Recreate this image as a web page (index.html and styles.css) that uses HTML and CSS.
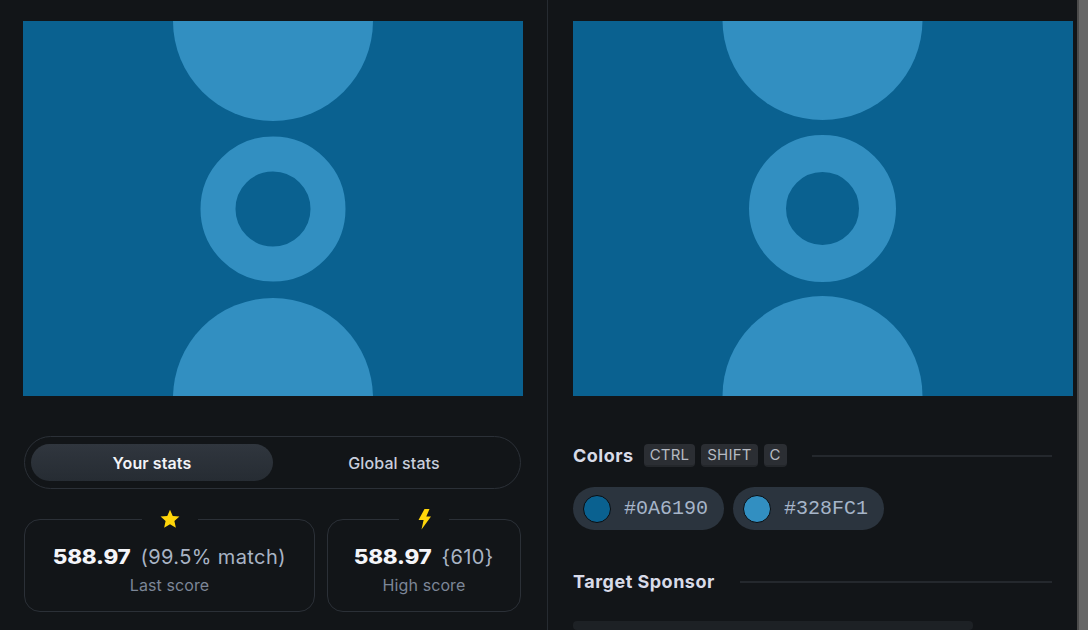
FILE: index.html
```html
<!DOCTYPE html>
<html>
<head>
<meta charset="utf-8">
<link rel="stylesheet" href="styles.css">
</head>
<body>
<div class="app">
  <section class="left">
    <svg class="canvas" viewBox="0 0 500 375" width="500" height="375">
      <rect width="500" height="375" fill="#0A6190"/>
      <circle cx="250" cy="0" r="100" fill="#328FC1"/>
      <circle cx="250" cy="188" r="55" fill="none" stroke="#328FC1" stroke-width="35"/>
      <circle cx="250" cy="377" r="100" fill="#328FC1"/>
    </svg>
    <div class="toggle">
      <button class="tab active">Your stats</button>
      <button class="tab">Global stats</button>
    </div>
    <div class="cards">
      <div class="card card-last">
        <span class="badge">
          <svg width="22" height="22" viewBox="0 0 24 24"><path d="M12 2l3 6.7 7.3.7-5.5 4.9 1.6 7.2L12 17.8l-6.4 3.7 1.6-7.2-5.5-4.9 7.3-.7z" fill="#FFD60A"/></svg>
        </span>
        <div class="value"><b>588.97</b><span class="sub">(99.5% match)</span></div>
        <div class="label">Last score</div>
      </div>
      <div class="card card-high">
        <span class="badge">
          <svg width="16" height="22" viewBox="0 0 16 22"><path d="M8.5 1H13.5L10.3 8.5H15L5.5 21.5 7.6 12H2.5z" fill="#FFD60A"/></svg>
        </span>
        <div class="value"><b>588.97</b><span class="sub">{610}</span></div>
        <div class="label">High score</div>
      </div>
    </div>
  </section>
  <section class="right">
    <svg class="canvas" viewBox="0 0 500 375" width="500" height="375">
      <rect width="500" height="375" fill="#0A6190"/>
      <circle cx="249.5" cy="-1" r="100" fill="#328FC1"/>
      <circle cx="249.5" cy="187.5" r="55" fill="none" stroke="#328FC1" stroke-width="37"/>
      <circle cx="249.5" cy="375" r="100" fill="#328FC1"/>
    </svg>
    <div class="heading heading-colors">
      <h2>Colors</h2>
      <span class="keys"><kbd>CTRL</kbd><kbd>SHIFT</kbd><kbd>C</kbd></span>
      <span class="rule"></span>
    </div>
    <div class="chips">
      <div class="chip"><span class="swatch swatch-dark"></span><span class="hex">#0A6190</span></div>
      <div class="chip"><span class="swatch swatch-light"></span><span class="hex">#328FC1</span></div>
    </div>
    <div class="heading heading-sponsor">
      <h2>Target Sponsor</h2>
      <span class="rule"></span>
    </div>
    <div class="sponsor-box"></div>
  </section>
  <div class="scrollbar"><div class="thumb"></div></div>
</div>
</body>
</html>
```
FILE: styles.css
```css
* { box-sizing: border-box; }
html, body { margin: 0; padding: 0; height: 100%; overflow: hidden; }
body {
  background: #121518;
  font-family: Inter, "Noto Sans", sans-serif;
  color: #d6d9e6;
}
.app {
  display: flex;
  height: 630px;
}
.left {
  width: 548px;
  flex: none;
  border-right: 1px solid #262b31;
  padding: 21px 0 0 23px;
  display: flex;
  flex-direction: column;
}
.canvas { display: block; flex: none; }
.toggle {
  margin: 40px 0 0 1px;
  width: 497px;
  height: 53px;
  border: 1.5px solid #2b3037;
  border-radius: 27px;
  display: flex;
  align-items: center;
  padding: 0 6px;
}
.tab {
  flex: none;
  width: 242px;
  height: 37px;
  border: none;
  border-radius: 19px;
  background: transparent;
  font-family: inherit;
  font-size: 16px;
  font-weight: 500;
  letter-spacing: 0.1px;
  color: #c9cedc;
  padding: 0;
}
.tab.active {
  background: linear-gradient(180deg, #30363e 0%, #262c33 100%);
  color: #f2f3f7;
  font-weight: 600;
}
.cards {
  display: flex;
  gap: 12px;
  margin: 30px 0 0 1px;
}
.card {
  position: relative;
  height: 93px;
  border: 1.5px solid #2b3037;
  border-radius: 16px;
  display: flex;
  flex-direction: column;
  align-items: center;
  padding-top: 24px;
}
.card-last { width: 291px; }
.card-high { width: 194px; }
.badge {
  position: absolute;
  top: -12px;
  left: 50%;
  transform: translateX(-50%);
  background: #121518;
  padding: 0 17px;
  height: 22px;
  display: flex;
  align-items: center;
  justify-content: center;
}
.value {
  font-size: 20px;
  line-height: 26px;
  display: flex;
  gap: 10px;
  align-items: baseline;
  white-space: nowrap;
}
.value b {
  font-weight: 800;
  color: #f4f5f9;
  letter-spacing: -0.2px;
  transform: scaleX(1.12);
  display: inline-block;
  margin: 0 4px;
}
.value .sub { color: #a9b4c5; font-weight: 400; letter-spacing: 0.4px; }
.label {
  margin-top: 5px;
  font-size: 16px;
  color: #7c8697;
  letter-spacing: 0.1px;
}
.right {
  flex: 1;
  padding: 21px 0 0 25px;
  display: flex;
  flex-direction: column;
}
.heading {
  display: flex;
  align-items: center;
  width: 479px;
}
.heading h2 {
  margin: 0;
  font-size: 18px;
  font-weight: 700;
  color: #d8dbe8;
  letter-spacing: 0.5px;
  white-space: nowrap;
}
.heading-colors { margin-top: 48px; height: 23px; }
.keys { display: flex; gap: 6px; margin-left: 10px; }
kbd {
  font-family: Inter, "Noto Sans", sans-serif;
  font-size: 15px;
  line-height: 21px;
  height: 23px;
  padding: 0 6px;
  background: #2b2e33;
  border-bottom: 2px solid #24272b;
  border-radius: 4px;
  color: #b6bac2;
  letter-spacing: 0.2px;
}
.rule {
  flex: 1;
  height: 2px;
  background: #24282d;
  margin-left: 25px;
}
.chips {
  display: flex;
  gap: 9px;
  margin-top: 20px;
}
.chip {
  width: 151px;
  height: 43px;
  border-radius: 22px;
  background: #2b343e;
  display: flex;
  align-items: center;
  padding-left: 10px;
  gap: 13px;
}
.swatch {
  width: 28px;
  height: 28px;
  border-radius: 50%;
  border: 1.5px solid #0b0d10;
  flex: none;
}
.swatch-dark { background: #0A6190; }
.swatch-light { background: #328FC1; }
.hex {
  font-family: "Liberation Mono", "DejaVu Sans Mono", monospace;
  font-size: 20px;
  color: #a6b5c9;
}
.heading-sponsor { margin-top: 41px; height: 24px; }
.sponsor-box {
  margin-top: 29px;
  width: 400px;
  height: 40px;
  background: #1d2125;
  border-radius: 4px;
}
.scrollbar {
  width: 11px;
  flex: none;
  background: #4b4b4b;
  padding-left: 2px;
}
.thumb { height: 100%; background: #676767; }
```
